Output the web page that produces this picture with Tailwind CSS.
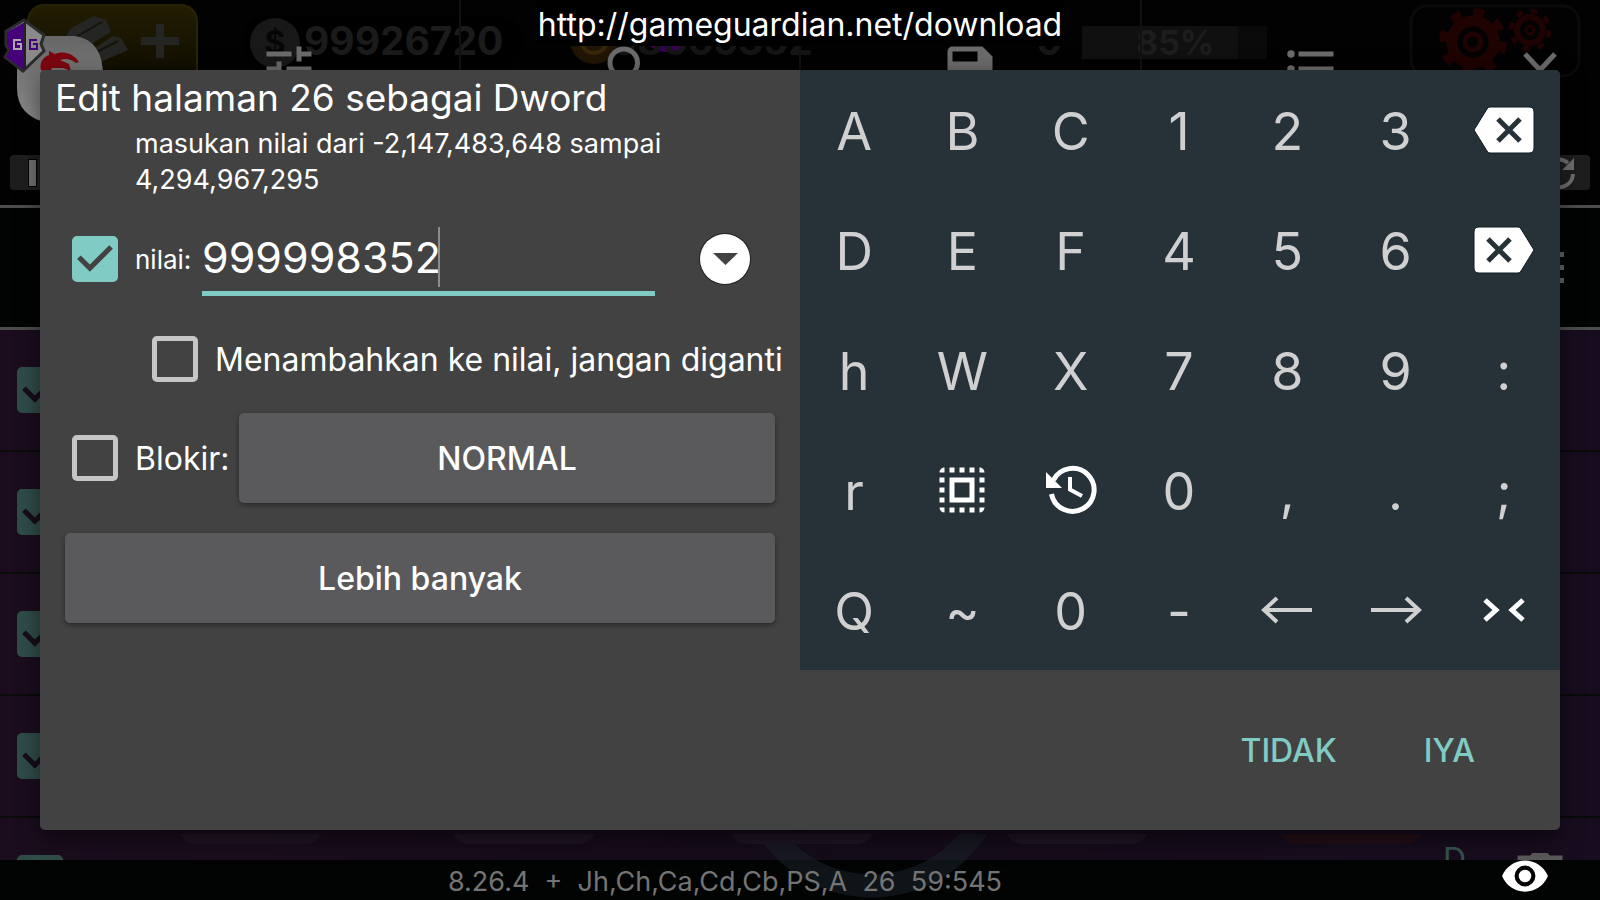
<!DOCTYPE html>
<html lang="id">
<head>
  <meta charset="UTF-8" />
  <title>GameGuardian - Edit halaman</title>
  <meta name="viewport" content="width=device-width, initial-scale=1.0" />
  <script src="https://cdn.jsdelivr.net/npm/@tailwindcss/browser@4"></script>
</head>
<body class="bg-black text-white font-['Inter','Roboto',sans-serif]">
  <main class="relative grid min-h-screen overflow-hidden">

    <!-- Screen behind the dialog -->
    <div class="col-start-1 row-start-1 flex flex-col">
      <header class="relative h-[205px] bg-[#020203]">
        <!-- Game HUD, left part -->
        <svg class="absolute top-0 left-0" width="1070" height="205" viewBox="0 0 1070 205" aria-hidden="true">
          <defs>
            <linearGradient id="gold" x1="0" y1="0" x2="0" y2="1"><stop offset="0" stop-color="#221d02" /><stop offset="1" stop-color="#0d0b00" /></linearGradient>
            <linearGradient id="face" x1="0" y1="0" x2="0" y2="1"><stop offset="0" stop-color="#666" /><stop offset="1" stop-color="#8c8c8c" /></linearGradient>
          </defs>
          <rect x="28" y="5" width="169" height="80" rx="16" fill="url(#gold)" stroke="#292306" stroke-width="2" />
          <path d="M66 36 71 28 94 16 106 20 111 32 83 49ZM86 54 113 36 121 38 128 50 101 62 88 60Z" fill="#252523" />
          <path d="M74 38 102 22M91 55 118 41" stroke="#15140c" stroke-width="2" />
          <path d="M160 24v34M141 41h38" stroke="#252523" stroke-width="8" />
          <rect x="243" y="15" width="280" height="53" rx="26" fill="#000" />
          <circle cx="275" cy="43" r="25" fill="#181818" />
          <text x="275" y="54" text-anchor="middle" font-size="32" font-weight="700" fill="#060606">$</text>
          <text x="304" y="55" font-size="39" font-weight="700" fill="#1b1b1b">99926720</text>
          <circle cx="594" cy="40" r="24" fill="#211603" />
          <circle cx="594" cy="40" r="13" fill="none" stroke="#382708" stroke-width="4" />
          <ellipse cx="667" cy="41" rx="19" ry="11" fill="#3a0055" />
          <text x="612" y="55" font-size="39" font-weight="700" fill="#151515">98565352</text>
          <text x="1036" y="55" font-size="39" font-weight="700" fill="#151515">0</text>
          <path d="M17 105V58q0-22 22-22h36q28 4 28 40v30q0 17-24 17H49q-32-6-32-35Z" fill="url(#face)" />
          <path d="M41 70c-2-7 2-13 8-15l0-4 6 3c9-4 19 0 24 8l-3 1c-5-4-11-5-16-3l9 4 2 7-8-3-11 0-3 6Z" fill="#7d0610" />
          <path d="M24 20 6 31v14l3 5-4 7 18 14 21-20-3-7 3-9Z" fill="#8a8a8a" stroke="#2b2b2b" stroke-width="3" />
          <path d="M25 22 7 32v13l3 5-4 7 18 13Z" fill="#46007a" />
          <path d="M25 22v47" stroke="#222" stroke-width="2" />
          <path d="M21 40h-7v9h7v-5h-4" fill="none" stroke="#aaa" stroke-width="2" />
          <path d="M37 40h-7v9h7v-5h-4" fill="none" stroke="#46007a" stroke-width="2" />
        </svg>
        <!-- Game HUD, right part -->
        <svg class="absolute top-0 right-0" width="530" height="100" viewBox="0 0 530 100" aria-hidden="true">
          <rect x="12" y="26" width="185" height="33" fill="#0a0a0a" />
          <rect x="12" y="26" width="156" height="33" fill="#101010" />
          <text x="66" y="55" font-size="34" font-weight="700" fill="#1d1d1d">85%</text>
          <rect x="341" y="6" width="168" height="70" rx="16" fill="#020202" stroke="#0b0b0b" stroke-width="3" />
          <g fill="none" stroke="#1f0202">
            <circle cx="403" cy="42" r="21" stroke-width="11" />
            <circle cx="403" cy="42" r="30" stroke-width="8" stroke-dasharray="11 12.56" />
            <circle cx="403" cy="42" r="8" stroke-width="5" />
            <circle cx="460" cy="30" r="13" stroke-width="6" />
            <circle cx="460" cy="30" r="19" stroke-width="5" stroke-dasharray="7 7.92" />
            <circle cx="460" cy="30" r="4" stroke-width="3" />
          </g>
        </svg>

        <!-- Tabs -->
        <nav class="relative flex h-[138px] text-[#6b6b6b]">
          <div class="w-[120px]"></div>
          <button class="flex flex-1 items-center justify-center border-r-2 border-[#111]" aria-label="Pengaturan">
            <svg class="size-[60px]" viewBox="0 0 24 24" fill="currentColor"><path d="M3 17v2h6v-2H3zM3 5v2h10V5H3zm10 16v-2h8v-2h-8v-2h-2v6h2zM7 9v2H3v2h4v2h2V9H7zm14 4v-2H11v2h10zm-6-4h2V7h4V5h-4V3h-2v6z" /></svg>
          </button>
          <button class="flex flex-1 items-center justify-center border-r-2 border-[#111]" aria-label="Cari">
            <svg class="size-[60px]" viewBox="0 0 24 24" fill="currentColor"><path d="M15.5 14h-.79l-.28-.27A6.47 6.47 0 0 0 16 9.5 6.5 6.5 0 1 0 9.5 16c1.61 0 3.09-.59 4.23-1.57l.27.28v.79l5 4.99L20.49 19l-4.99-5zm-6 0C7.01 14 5 11.99 5 9.5S7.01 5 9.5 5 14 7.01 14 9.5 11.99 14 9.5 14z" /></svg>
          </button>
          <button class="flex flex-1 items-center justify-center border-r-2 border-[#111]" aria-label="Simpan">
            <svg class="size-[60px]" viewBox="0 0 24 24" fill="currentColor"><path d="M17 3H5a2 2 0 0 0-2 2v14c0 1.1.9 2 2 2h14c1.1 0 2-.9 2-2V7l-4-4zm-5 16a3 3 0 1 1 0-6 3 3 0 0 1 0 6zm3-10H5V5h10v4z" /></svg>
          </button>
          <button class="flex flex-1 items-center justify-center" aria-label="Daftar">
            <svg class="size-[60px]" viewBox="0 0 24 24" fill="currentColor"><path d="M4 10.500a1.500 1.500 0 1 0 0 3 1.500 1.500 0 0 0 0-3zm0-6a1.500 1.500 0 1 0 0 3 1.500 1.500 0 0 0 0-3zM7 19h14v-2H7v2zm0-6h14v-2H7v2zm0-8v2h14V5H7z" /></svg>
          </button>
          <button class="flex w-[120px] items-center justify-center" aria-label="Tutup">
            <svg class="size-[60px]" viewBox="0 0 60 60" fill="none" stroke="currentColor" stroke-width="5"><path d="m15 15 15 16 15-16" /></svg>
          </button>
        </nav>

        <div class="relative flex justify-between px-[10px] pt-[17px]">
          <button class="flex h-[35px] w-20 items-center rounded bg-[#1e1e1e] pl-[18px]" aria-label="Jeda">
            <span class="h-7 w-[9px] border border-black bg-[#707070]"></span>
          </button>
          <button class="flex h-[35px] w-[62px] items-center justify-center rounded bg-[#1e1e1e] text-[#707070]" aria-label="Segarkan">
            <svg class="size-9" viewBox="0 0 36 36" fill="none" stroke="currentColor" stroke-width="4"><path d="M4 17a14 14 0 0 1 23-9M32 19a14 14 0 0 1-24 9" /><path d="M33 3v12H21zM3 33V21h12z" fill="currentColor" stroke="none" /></svg>
          </button>
        </div>
      </header>

      <div class="flex h-[125px] items-center justify-end border-y-[3px] border-[#4d4d4d] bg-[#020404] pr-9">
        <button class="flex flex-col gap-2" aria-label="Menu">
          <span class="size-[5px] bg-[#666]"></span>
          <span class="size-[5px] bg-[#666]"></span>
          <span class="size-[5px] bg-[#666]"></span>
        </button>
      </div>

      <!-- Result rows -->
      <ul id="rows" class="relative h-[530px] overflow-hidden bg-linear-to-r from-[#1b0d1e] via-[#150c1a] to-[#180d1f]"></ul>

      <footer class="relative flex flex-1 items-center bg-[#020404] text-[#747474]">
        <svg class="absolute bottom-0 left-0" width="1450" height="70" viewBox="0 830 1450 70" aria-hidden="true">
          <circle cx="872" cy="757" r="125" fill="none" stroke="#1a2429" stroke-opacity=".5" stroke-width="23" />
          <path d="M180 830h142q-6 10-18 10H198q-12 0-18-10ZM453 830h142q-6 10-18 10H471q-12 0-18-10ZM731 830h142q-6 10-18 10H749q-12 0-18-10ZM1006 830h142q-6 10-18 10h-106q-12 0-18-10Z" fill="#1f1523" />
          <path d="M1280 830h142q-6 10-18 10h-106q-12 0-18-10Z" fill="#230f17" />
        </svg>
        <p class="relative flex-1 text-center text-[27px] leading-[44px] whitespace-pre">8.26.4  +  Jh,Ch,Ca,Cd,Cb,PS,A  26  59:545</p>
        <button class="relative flex w-[150px] justify-center text-white" aria-label="Tampilkan">
          <svg class="-mt-5 -mb-2 size-[50px]" viewBox="0 0 24 24" fill="currentColor"><path d="M12 4.500C7 4.500 2.730 7.610 1 12c1.730 4.390 6 7.500 11 7.500s9.270-3.110 11-7.500c-1.730-4.390-6-7.500-11-7.500zM12 17a5 5 0 1 1 0-10 5 5 0 0 1 0 10zm0-8a3 3 0 1 0 0 6 3 3 0 0 0 0-6z" /></svg>
        </button>
      </footer>
    </div>

    <!-- Update address -->
    <p class="absolute top-0 left-1/2 h-[46px] w-[526px] -translate-x-1/2 bg-black text-center text-[32px] leading-[50px] whitespace-nowrap">http://gameguardian.net/download</p>

    <!-- Edit dialog -->
    <form class="relative col-start-1 row-start-1 mx-10 my-[70px] self-start overflow-hidden rounded-[5px] bg-[#424242] shadow-[0_8px_24px_rgba(0,0,0,0.5)]" onsubmit="return false">
      <div class="grid grid-cols-2">
        <div class="pl-[15px]">
          <h1 class="text-[37px] leading-[56px] whitespace-nowrap">Edit halaman 26 sebagai Dword</h1>
          <p class="pr-20 pl-20 text-[27px] leading-9">masukan nilai dari -2,147,483,648 sampai 4,294,967,295</p>

          <div class="flex h-[122px] items-center pl-[17px]">
            <span class="grid">
              <input id="use-value" type="checkbox" checked class="peer col-start-1 row-start-1 size-[46px] appearance-none rounded-[5px] border-[5px] border-[#c6c6c6] checked:border-[#80cbc4] checked:bg-[#80cbc4]" />
              <svg class="pointer-events-none invisible col-start-1 row-start-1 size-[46px] peer-checked:visible" viewBox="3 3 18 18" fill="#424242"><path d="m10 17-5-5 1.410-1.410L10 14.170l7.590-7.590L19 8z" /></svg>
            </span>
            <label for="value" class="w-[67px] pl-[17px] text-[26px] whitespace-nowrap">nilai:</label>
            <div class="relative ml-[17px] flex-1">
              <input id="value" type="text" value="999998352" class="h-[74px] w-full border-b-[5px] border-[#80cbc4] bg-transparent text-[43px] outline-none" />
              <span class="absolute top-[5px] left-[236px] h-[60px] w-[2px] bg-[#8c8c8c]"></span>
            </div>
            <button type="button" class="mr-[50px] ml-[45px] flex size-[50px] items-center justify-center rounded-full bg-white ring-1 ring-[#222]" aria-label="Pilih nilai">
              <svg width="25" height="12" viewBox="0 0 25 12" fill="#424242"><path d="M0 0h25L12.500 12z" /></svg>
            </button>
          </div>

          <div class="flex h-[78px] items-center pl-[97px]">
            <input id="add" type="checkbox" class="size-[46px] shrink-0 appearance-none rounded-[5px] border-[5px] border-[#c6c6c6] checked:bg-[#80cbc4]" />
            <label for="add" class="pt-[2px] pl-[17px] text-[32px] whitespace-nowrap">Menambahkan ke nilai, jangan diganti</label>
          </div>

          <div class="mt-[15px] mr-[25px] flex items-center pl-[17px]">
            <input id="freeze" type="checkbox" class="size-[46px] shrink-0 appearance-none rounded-[5px] border-[5px] border-[#c6c6c6] checked:bg-[#80cbc4]" />
            <label for="freeze" class="w-[121px] shrink-0 pt-[2px] pl-[17px] text-[32px] whitespace-nowrap">Blokir:</label>
            <button type="button" class="h-[90px] flex-1 rounded-[5px] bg-[#5a5a5c] pt-[2px] text-[32px] font-medium shadow-[0_2px_5px_rgba(0,0,0,0.4)]">NORMAL</button>
          </div>
          <div class="mt-[30px] mr-[25px] ml-[10px] flex">
            <button type="button" class="h-[90px] flex-1 rounded-[5px] bg-[#5a5a5c] pt-[2px] text-[32px] font-medium shadow-[0_2px_5px_rgba(0,0,0,0.4)]">Lebih banyak</button>
          </div>
        </div>

        <!-- Keypad -->
        <div class="grid auto-rows-[120px] grid-cols-7 bg-[#263238] pr-[2px] text-[52px] leading-[124px] text-[#d0d0d0]">
          <button type="button">A</button>
          <button type="button">B</button>
          <button type="button">C</button>
          <button type="button">1</button>
          <button type="button">2</button>
          <button type="button">3</button>
          <button type="button" class="flex items-center justify-center" aria-label="Hapus">
            <svg width="62" height="48" viewBox="0 0 62 48"><path d="M17 1h39q5 0 5 5v36q0 5-5 5H17q-2 0-3-2L1 24 14 3q1-2 3-2Z" fill="#fff" stroke="#101a20" /><path d="m25 13 22 22M47 13 25 35" stroke="#263238" stroke-width="5" /></svg>
          </button>
          <button type="button">D</button>
          <button type="button">E</button>
          <button type="button">F</button>
          <button type="button">4</button>
          <button type="button">5</button>
          <button type="button">6</button>
          <button type="button" class="flex items-center justify-center" aria-label="Hapus ke depan">
            <svg width="62" height="48" viewBox="0 0 62 48"><path d="M45 1H6Q1 1 1 6v36q0 5 5 5h39q2 0 3-2l13-21L48 3q-1-2-3-2Z" fill="#fff" stroke="#101a20" /><path d="m15 13 22 22M37 13 15 35" stroke="#263238" stroke-width="5" /></svg>
          </button>
          <button type="button">h</button>
          <button type="button">W</button>
          <button type="button">X</button>
          <button type="button">7</button>
          <button type="button">8</button>
          <button type="button">9</button>
          <button type="button">:</button>
          <button type="button">r</button>
          <button type="button" class="flex items-center justify-center" aria-label="Pilih semua">
            <svg class="size-[60px]" viewBox="0 0 24 24" fill="#fff"><path d="M3 5h2V3c-1.100 0-2 .9-2 2zm0 8h2v-2H3v2zm4 8h2v-2H7v2zM3 9h2V7H3v2zm10-6h-2v2h2V3zm6 0v2h2c0-1.100-.9-2-2-2zM5 21v-2H3c0 1.100.9 2 2 2zm-2-4h2v-2H3v2zM9 3H7v2h2V3zm2 18h2v-2h-2v2zm8-8h2v-2h-2v2zm0 8c1.100 0 2-.9 2-2h-2v2zm0-12h2V7h-2v2zm0 8h2v-2h-2v2zm-4 4h2v-2h-2v2zm0-16h2V3h-2v2zM7 17h10V7H7v10zm2-8h6v6H9V9z" /></svg>
          </button>
          <button type="button" class="flex items-center justify-center" aria-label="Riwayat">
            <svg width="60" height="60" viewBox="0 0 60 60"><path d="M12.500 20A21.500 21.500 0 1 1 10.500 34" fill="none" stroke="#fff" stroke-width="5" /><path d="M5 12v16h16z" fill="#fff" /><path d="M29 17v12.500L41 36" fill="none" stroke="#fff" stroke-width="4" /></svg>
          </button>
          <button type="button">0</button>
          <button type="button">,</button>
          <button type="button">.</button>
          <button type="button">;</button>
          <button type="button">Q</button>
          <button type="button">~</button>
          <button type="button">0</button>
          <button type="button">-</button>
          <button type="button" class="flex items-center justify-center" aria-label="Kiri">
            <svg width="52" height="28" viewBox="0 0 52 28" fill="none" stroke="#d0d0d0" stroke-width="4"><path d="M51 14H3M16 2 3 14l13 12" /></svg>
          </button>
          <button type="button" class="flex items-center justify-center" aria-label="Kanan">
            <svg width="52" height="28" viewBox="0 0 52 28" fill="none" stroke="#d0d0d0" stroke-width="4"><path d="M1 14h48M36 2l13 12-13 12" /></svg>
          </button>
          <button type="button" class="flex items-center justify-center" aria-label="Ciutkan">
            <svg width="42" height="24" viewBox="0 0 42 24" fill="none" stroke="#fff" stroke-width="5"><path d="m2 2 11 10L2 22M40 2 29 12l11 10" /></svg>
          </button>
        </div>
      </div>

      <div class="flex h-40 items-center justify-end gap-[87px] pt-[2px] pr-[85px] text-[32px] font-medium text-[#80cbc4]">
        <button type="button">TIDAK</button>
        <button type="submit">IYA</button>
      </div>
    </form>
  </main>

  <script>
    const rows = document.getElementById('rows');
    for (let i = 0; i < 5; i++) {
      const li = document.createElement('li');
      li.className = 'flex h-[122px] items-center justify-between border-b-2 border-[#0b0a0b] pl-[17px]';
      li.innerHTML = `
        <span class="grid">
          <input type="checkbox" checked aria-label="Baris ${i + 1}" class="col-start-1 row-start-1 size-[46px] appearance-none rounded-[5px] bg-[#304d49]" />
          <svg class="pointer-events-none col-start-1 row-start-1 size-[46px]" viewBox="3 3 18 18" fill="#170d1b"><path d="m10 17-5-5 1.410-1.410L10 14.170l7.590-7.590L19 8z" /></svg>
        </span>
        ${i === 4 ? `
        <span class="flex items-start pr-[30px]">
          <span class="-mt-2 pr-11 text-[32px] leading-10 text-[#355450]">D</span>
          <svg class="size-[60px]" viewBox="0 0 24 24" fill="#5a5a5a"><path d="M9 2h6l1 1h5v3H3V3h5zM5 8h14v13H5z" /></svg>
        </span>` : ''}`;
      rows.appendChild(li);
    }
  </script>
</body>
</html>
